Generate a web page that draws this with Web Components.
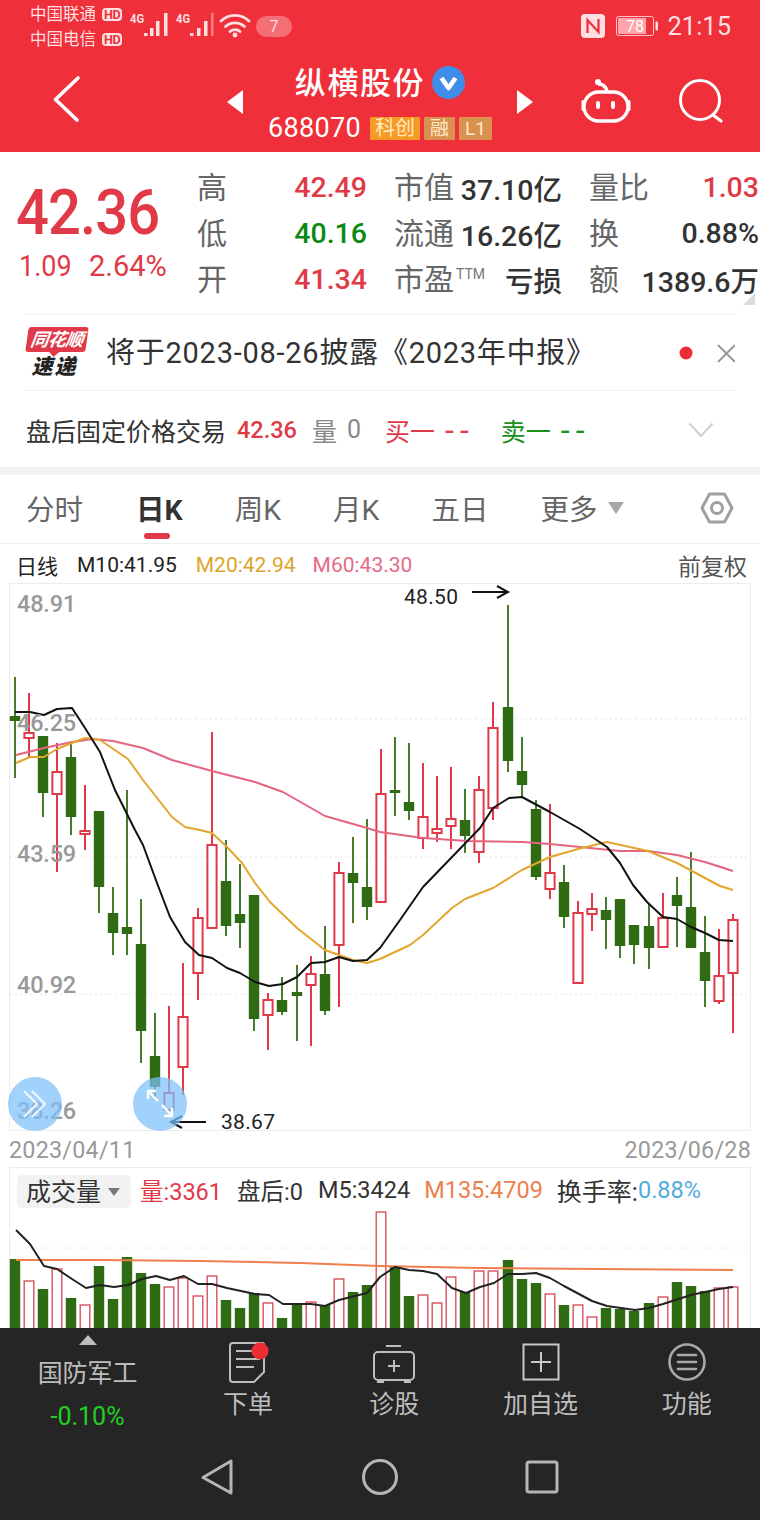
<!DOCTYPE html>
<html lang="zh">
<head>
<meta charset="utf-8">
<title>纵横股份</title>
<style>
  html, body { margin: 0; padding: 0; background: #fff; }
  body {
    width: 760px;
    height: 1520px;
    overflow: hidden;
    font-family: Roboto, "Noto Sans CJK SC", sans-serif;
    display: flex;
    flex-direction: column;
  }
</style>
</head>
<body>
  <stock-header></stock-header>
  <quote-panel></quote-panel>
  <news-strip>将于2023-08-26披露《2023年中报》</news-strip>
  <after-hours></after-hours>
  <period-tabs></period-tabs>
  <kline-chart></kline-chart>
  <volume-chart></volume-chart>
  <bottom-bar></bottom-bar>

<script>
// x, high, low, bodyTop, bodyBottom, g/r  -- read off the screenshot
const CANDLES = [
  [15,677,778,716,721,'g'],[29,693,757,733,738,'r'],[43,736,817,736,793,'g'],[57,743,872,772,794,'r'],
  [71,743,835,757,817,'g'],[85,785,850,831,834,'r'],[99,811,913,811,887,'g'],[113,887,955,913,933,'g'],
  [127,790,955,927,934,'g'],[141,899,1063,944,1031,'g'],[155,1013,1098,1056,1087,'g'],[169,1006,1110,1093,1110,'r'],
  [183,963,1095,1017,1067,'r'],[198,908,1000,918,973,'r'],[212,732,928,845,928,'r'],[226,840,936,881,926,'g'],
  [240,864,948,914,923,'g'],[254,895,1031,895,1019,'g'],[268,993,1050,1000,1015,'r'],[282,977,1015,1000,1012,'g'],
  [297,965,1041,992,996,'g'],[311,956,1046,974,985,'r'],[325,926,1015,974,1011,'g'],[339,862,1007,873,945,'r'],
  [353,837,923,873,883,'g'],[367,819,920,887,907,'g'],[381,749,902,794,902,'r'],[395,737,816,790,793,'g'],
  [409,743,820,802,811,'g'],[423,763,849,817,838,'r'],[437,776,842,829,833,'r'],[451,767,849,819,826,'r'],
  [465,789,853,820,836,'g'],[479,776,863,790,852,'r'],[493,702,820,728,808,'r'],[508,605,772,707,761,'g'],
  [522,737,797,771,785,'g'],[536,800,880,809,877,'g'],[550,804,899,873,889,'r'],[564,865,928,882,917,'g'],
  [578,901,983,913,983,'r'],[592,893,931,909,914,'r'],[606,897,949,910,920,'g'],[620,899,958,899,946,'g'],
  [634,925,964,925,945,'g'],[649,903,969,926,948,'g'],[663,893,947,918,947,'r'],[677,877,947,895,906,'g'],
  [691,852,948,907,948,'g'],[705,916,1007,952,981,'g'],[719,929,1004,976,1001,'r'],[733,914,1033,920,973,'r']
];
const M10 = [15,712,30,712,44,715,57,709,72,708,85,728,100,752,115,790,135,830,143,845,157,883,170,917,185,942,199,955,212,958,227,968,240,973,255,982,269,986,283,984,297,977,311,963,325,962,339,957,353,961,367,960,380,948,400,920,423,887,452,857,480,828,493,808,509,798,522,797,550,812,580,829,607,847,620,863,633,885,647,902,663,917,677,919,691,927,705,933,719,940,733,941];
const M20 = [16,763,30,757,44,757,57,749,72,743,85,738,100,740,128,759,143,780,172,817,185,827,200,830,212,833,227,847,242,863,255,883,270,902,297,928,325,950,353,960,367,963,380,959,410,945,423,935,452,908,465,899,493,888,522,870,550,857,578,849,607,842,648,851,677,863,705,878,720,886,733,890];
const M60 = [16,755,44,748,72,742,93,739,113,741,143,748,172,760,212,771,255,782,283,792,325,816,367,828,380,832,423,838,467,841,523,842,550,844,590,848,620,851,648,851,677,855,705,862,733,871];
const VOL = [1258,1280,1288,1268,1297,1304,1265,1298,1256,1272,1283,1286,1277,1295,1275,1299,1307,1292,1302,1317,1303,1301,1304,1278,1291,1284,1211,1266,1295,1294,1302,1276,1291,1270,1270,1259,1278,1282,1293,1304,1304,1316,1307,1308,1310,1302,1296,1281,1285,1290,1287,1286];
const VOL_M5 = [16,1229,30,1243,44,1265,57,1268,72,1278,86,1287,100,1284,114,1286,128,1284,142,1278,156,1275,170,1279,184,1275,198,1283,212,1283,227,1287,255,1293,269,1294,283,1303,297,1303,311,1303,325,1305,339,1299,367,1292,380,1276,395,1266,409,1269,423,1270,437,1273,452,1287,466,1292,480,1286,494,1282,508,1273,522,1273,536,1272,550,1277,564,1285,592,1300,607,1305,635,1309,649,1307,663,1303,691,1294,719,1288,733,1286];
const VOL_M135 = [16,1259,100,1259,200,1260,300,1262,380,1265,480,1267,600,1268,733,1269];

const RED = '#e03a48';
const GREEN = '#2e6b12';
const FONT = 'Roboto, "Noto Sans CJK SC", sans-serif';

function pts(a) {
  let s = '';
  for (let i = 0; i < a.length; i += 2) s += a[i] + ',' + a[i + 1] + ' ';
  return s;
}

class StockHeader extends HTMLElement {
  constructor() {
    super();
    this.attachShadow({ mode: 'open' });
  }

  connectedCallback() {
    this.shadowRoot.innerHTML = `
      <style>
        :host { display: block; height: 152px; background: #ef303b; color: #fff; font-family: ${FONT}; flex: none; }
        .status { height: 52px; display: flex; align-items: center; padding: 0 29px 0 30px; color: #ffdfe0; }
        .carriers { display: flex; flex-direction: column; font-size: 16.5px; line-height: 25px; width: 100px; flex: none; margin-top: 1px; }
        .carriers div { display: flex; align-items: center; gap: 6px; white-space: nowrap; }
        .hd { font-size: 12.5px; font-weight: 700; background: #ffdfe0; color: #ef303b; border-radius: 4px; line-height: 13px; padding: 0 2px; letter-spacing: -.3px; }
        .badge { margin-left: 4px; width: 36px; height: 21px; border-radius: 11px; background: rgba(255,255,255,.3); text-align: center; font-size: 16px; line-height: 21px; }
        .right { margin-left: auto; display: flex; align-items: center; }
        .time { font-size: 25.5px; margin-left: 8px; letter-spacing: 0; }
        .nav { height: 100px; display: flex; position: relative; }
        .back { width: 220px; flex: none; }
        .mid { width: 320px; flex: none; display: flex; align-items: center; }
        .mid svg { flex: none; }
        .who { flex: 1; display: flex; flex-direction: column; align-items: center; align-self: flex-start; }
        .name { display: flex; align-items: center; font-size: 31px; font-weight: 500; height: 44px; margin-top: 8px; gap: 7px; letter-spacing: 1.6px; }
        .name span { padding-bottom: 3px; }
        .code { display: flex; align-items: center; height: 24px; margin-top: 12px; }
        .num { font-size: 27px; letter-spacing: .3px; margin-right: 9px; }
        .tag { height: 23px; line-height: 23px; font-size: 20px; padding: 0 5px; background: #f59b23; color: #ffeac8; margin-right: 4px; border-radius: 1px; }
        .tag.b { background: #d9914f; font-size: 19px; padding: 0 6px; }
        .icons { display: flex; align-items: flex-start; }
      </style>
      <div class="status">
        <div class="carriers">
          <div>中国联通<span class="hd">HD</span></div>
          <div>中国电信<span class="hd">HD</span></div>
        </div>
        <svg width="122" height="36" viewBox="130 8 122 36" style="flex:none">
          <text x="130" y="23" font-size="13" font-weight="700" fill="#ffdfe0" font-family="Roboto" textLength="14" lengthAdjust="spacingAndGlyphs">4G</text>
          <text x="176" y="23" font-size="13" font-weight="700" fill="#ffdfe0" font-family="Roboto" textLength="14" lengthAdjust="spacingAndGlyphs">4G</text>
          <g fill="#ffdfe0">
            <rect x="144" y="33" width="3.500" height="3"/><rect x="150" y="28" width="3.500" height="8"/><rect x="156" y="21" width="3.500" height="15"/><rect x="164" y="13" width="3.500" height="23"/>
            <rect x="190" y="33" width="3.500" height="3"/><rect x="197" y="28" width="3.500" height="8"/><rect x="204" y="21" width="3.500" height="15"/>
            <rect x="211" y="13" width="2.500" height="23" opacity=".45"/>
          </g>
          <g fill="none" stroke="#ffdfe0" stroke-width="2.800" stroke-linecap="round">
            <path d="M221 21a20 20 0 0 1 28 0"/><path d="M225.500 26.500a14 14 0 0 1 19 0"/><path d="M230 31.500a7.500 7.500 0 0 1 10 0"/>
          </g>
          <circle cx="235" cy="35" r="2.400" fill="#ffdfe0"/>
        </svg>
        <div class="badge">7</div>
        <div class="right">
          <svg width="24" height="24" viewBox="0 0 24 24">
            <rect width="24" height="24" rx="4" fill="#ffdfe0"/>
            <path d="M6.500 19V6l11 12V5" fill="none" stroke="#ef303b" stroke-width="2.200"/>
          </svg>
          <svg width="43" height="20" viewBox="0 0 43 20" style="margin-left:11px">
            <rect x=".5" y=".5" width="37" height="19" rx="2" fill="none" stroke="#ffc5c9"/>
            <rect x="2" y="2" width="28" height="16" fill="#ffa4aa"/>
            <rect x="39.500" y="5.500" width="2.500" height="9" rx="1" fill="#ffdfe0"/>
            <text x="19" y="15.500" text-anchor="middle" font-size="16" fill="#fff" font-family="Roboto">78</text>
          </svg>
          <span class="time">21:15</span>
        </div>
      </div>
      <div class="nav">
        <div class="back">
          <svg width="100" height="100" viewBox="0 52 100 100">
            <path d="M78 78 55.500 99.500 77 120" fill="none" stroke="#fff" stroke-width="3.600" stroke-linecap="round" stroke-linejoin="round"/>
          </svg>
        </div>
        <div class="mid">
          <svg width="26" height="26" viewBox="0 0 26 26"><path d="M7 13 23 1V25Z" fill="#fff"/></svg>
          <div class="who">
            <div class="name"><span>纵横股份</span>
              <svg width="33" height="33" viewBox="0 0 33 33"><circle cx="16.500" cy="16.500" r="16.500" fill="#3f8de8"/><path d="M9.500 12l7 10 7-10" fill="none" stroke="#fff" stroke-width="4.600" stroke-linejoin="round"/></svg>
            </div>
            <div class="code"><span class="num">688070</span><span class="tag">科创</span><span class="tag b">融</span><span class="tag b" style="margin-right:0">L1</span></div>
          </div>
          <svg width="26" height="26" viewBox="0 0 26 26"><path d="M19 13 3 1V25Z" fill="#fff"/></svg>
        </div>
        <div class="icons">
          <svg width="56" height="56" viewBox="578 77 56 56" style="margin:25px 0 0 38px">
            <g fill="none" stroke="#fff" stroke-width="3.400">
              <rect x="584" y="92" width="44" height="29" rx="14.500"/>
              <path d="M598 84c5 0 8 3 9 7"/>
            </g>
            <circle cx="598" cy="82" r="3" fill="#fff"/>
            <rect x="596" y="101" width="4" height="8" rx="2" fill="#fff"/>
            <rect x="611" y="101" width="4" height="8" rx="2" fill="#fff"/>
            <rect x="581.500" y="100" width="3" height="11" rx="1.500" fill="#fff"/>
            <rect x="627.500" y="100" width="3" height="11" rx="1.500" fill="#fff"/>
          </svg>
          <svg width="50" height="50" viewBox="676 76 50 50" style="margin:24px 0 0 42px">
            <circle cx="700" cy="100" r="19.500" fill="none" stroke="#fff" stroke-width="3"/>
            <path d="M713 115l8 6" stroke="#fff" stroke-width="3.200" stroke-linecap="round"/>
          </svg>
        </div>
      </div>
    `;
  }
}
customElements.define('stock-header', StockHeader);

class QuotePanel extends HTMLElement {
  constructor() {
    super();
    this.attachShadow({ mode: 'open' });
  }

  connectedCallback() {
    this.shadowRoot.innerHTML = `
      <style>
        :host { display: flex; height: 162px; box-sizing: border-box; padding-top: 12px; background: #fff; flex: none; position: relative; font-family: ${FONT}; overflow: hidden; }
        .price { width: 197px; flex: none; padding-left: 16px; box-sizing: border-box; color: ${RED}; }
        .big { font-size: 63px; font-weight: 500; line-height: 72px; margin-top: 13px; letter-spacing: -1px; transform: scaleX(.92); transform-origin: left; white-space: nowrap; }
        .chg { font-size: 29px; line-height: 36px; margin-top: -1px; margin-left: 3px; white-space: nowrap; display: flex; }
        .chg span:first-child { width: 70px; transform: scaleX(.93); transform-origin: left; }
        .grid { display: grid; grid-template-columns: 170px 168px 170px; column-gap: 27px; grid-auto-rows: 46px; align-items: center; }
        .cell { display: flex; align-items: center; justify-content: space-between; font-size: 30px; color: #666; white-space: nowrap; }
        .cell span { padding-bottom: 4px; }
        .cell b { font-weight: 500; font-size: 28.500px; color: #333; }
        .cell b.r { color: ${RED}; } .cell b.g { color: #0b8a12; }
        sup { font-size: 14px; vertical-align: 11px; line-height: 0; color: #777; margin-left: 2px; }
        .corner { position: absolute; right: 5px; bottom: 9px; width: 0; height: 0; border-left: 12px solid transparent; border-bottom: 12px solid #dcdcdc; }
      </style>
      <div class="price">
        <div class="big">42.36</div>
        <div class="chg"><span>1.09</span><span>2.64%</span></div>
      </div>
      <div class="grid">
        <div class="cell"><span>高</span><b class="r">42.49</b></div>
        <div class="cell"><span>市值</span><b>37.10亿</b></div>
        <div class="cell"><span>量比</span><b class="r">1.03</b></div>
        <div class="cell"><span>低</span><b class="g">40.16</b></div>
        <div class="cell"><span>流通</span><b>16.26亿</b></div>
        <div class="cell"><span>换</span><b>0.88%</b></div>
        <div class="cell"><span>开</span><b class="r">41.34</b></div>
        <div class="cell"><span>市盈<sup>TTM</sup></span><b>亏损</b></div>
        <div class="cell"><span>额</span><b>1389.6万</b></div>
      </div>
      <div class="corner"></div>
    `;
  }
}
customElements.define('quote-panel', QuotePanel);

class NewsStrip extends HTMLElement {
  constructor() {
    super();
    this.attachShadow({ mode: 'open' });
  }

  connectedCallback() {
    this.shadowRoot.innerHTML = `
      <style>
        :host { display: flex; align-items: center; height: 77px; box-sizing: border-box; margin: 0 25px 0 24px; border-top: 1px solid #f1f1f1; border-bottom: 1px solid #f1f1f1; font-family: ${FONT}; flex: none; }
        .logo { width: 62px; margin-left: 2px; flex: none; display: flex; flex-direction: column; align-items: center; margin-top: 1px; }
        .tag { width: 60px; height: 25px; background: ${RED}; border-radius: 3px; transform: skewX(-8deg); color: #fff; font-size: 18px; line-height: 25px; font-style: italic; font-weight: 700; text-align: center; white-space: nowrap; letter-spacing: -.5px; position: relative; }
        .tag::after { content: ""; position: absolute; left: 24px; bottom: -5px; border: 5px solid transparent; border-bottom: 0; border-top-color: ${RED}; }
        .su { font-size: 21px; line-height: 24px; font-weight: 900; font-style: italic; color: #222; margin-top: 3px; letter-spacing: 2px; margin-right: 5px; }
        .text { margin-left: 18px; padding-bottom: 5px; font-size: 29px; letter-spacing: .75px; color: #333; white-space: nowrap; flex: 1; }
        svg { flex: none; }
      </style>
      <div class="logo"><div class="tag">同花顺</div><div class="su">速递</div></div>
      <div class="text"><slot></slot></div>
      <svg width="62" height="24" viewBox="0 0 62 24"><circle cx="13" cy="12" r="6.500" fill="#ee2c36"/><path d="M45 4l17 17M62 4 45 21" stroke="#9a9a9a" stroke-width="2" fill="none"/></svg>
    `;
  }
}
customElements.define('news-strip', NewsStrip);

class AfterHours extends HTMLElement {
  constructor() {
    super();
    this.attachShadow({ mode: 'open' });
  }

  connectedCallback() {
    this.shadowRoot.innerHTML = `
      <style>
        :host { display: flex; align-items: center; height: 84px; box-sizing: border-box; padding: 1px 0 0 26px; border-bottom: 8px solid #f2f2f2; font-family: ${FONT}; font-size: 25px; color: #333; white-space: nowrap; flex: none; }
        .red { color: ${RED}; } .green { color: #17901c; } .grey { color: #888; }
        span { display: block; }
        .dash { font-size: 32px; letter-spacing: 6px; margin-left: 10px; }
        svg { margin-left: auto; margin-right: 46px; }
      </style>
      <span>盘后固定价格交易</span>
      <span class="red" style="margin-left:11px;font-size:23.500px;font-weight:500">42.36</span>
      <span class="grey" style="margin-left:15px">量</span>
      <span class="grey" style="margin-left:10px">0</span>
      <span class="red" style="margin-left:24px">买一</span>
      <span class="red dash">--</span>
      <span class="green" style="margin-left:26px">卖一</span>
      <span class="green dash">--</span>
      <svg width="26" height="16" viewBox="0 0 26 16"><path d="M1.500 1.500 13 14 24.500 1.500" fill="none" stroke="#cfcfcf" stroke-width="2"/></svg>
    `;
  }
}
customElements.define('after-hours', AfterHours);

class PeriodTabs extends HTMLElement {
  constructor() {
    super();
    this.attachShadow({ mode: 'open' });
  }

  connectedCallback() {
    this.shadowRoot.innerHTML = `
      <style>
        :host { display: flex; align-items: center; height: 69px; box-sizing: border-box; padding: 0 26px 3px 26px; border-bottom: 1px solid #eeeeee; font-family: ${FONT}; font-size: 28.500px; color: #666; white-space: nowrap; flex: none; position: relative; }
        span { display: block; }
        .on { font-weight: 700; color: #333; position: relative; }
        .on::after { content: ""; position: absolute; left: 8px; bottom: -11px; width: 26px; height: 6px; border-radius: 3px; background: ${RED}; }
        .tri { width: 0; height: 0; border: 8px solid transparent; border-bottom: 0; border-top: 12px solid #a8a8a8; margin-left: 11px; }
        svg { margin-left: auto; }
      </style>
      <span>分时</span>
      <span class="on" style="margin-left:53px">日K</span>
      <span style="margin-left:52px">周K</span>
      <span style="margin-left:52px">月K</span>
      <span style="margin-left:52px">五日</span>
      <span style="margin-left:52px">更多</span>
      <span class="tri"></span>
      <svg width="34" height="32" viewBox="0 0 34 32">
        <path d="M9.500 2h15L32 16l-7.500 14h-15L2 16Z" fill="none" stroke="#a0a0a0" stroke-width="3" stroke-linejoin="round"/>
        <circle cx="17" cy="16" r="5.500" fill="none" stroke="#a0a0a0" stroke-width="3"/>
      </svg>
    `;
  }
}
customElements.define('period-tabs', PeriodTabs);

class KlineChart extends HTMLElement {
  constructor() {
    super();
    this.attachShadow({ mode: 'open' });
  }

  connectedCallback() {
    let marks = '';
    for (const [x, hi, lo, top, bot, c] of CANDLES) {
      const col = c === 'g' ? GREEN : RED;
      marks += `<path d="M${x} ${hi}V${lo}" stroke="${col}" stroke-width="2" opacity="${c === 'g' ? .88 : 1}"/>`;
      if (c === 'g') {
        marks += `<rect x="${x - 5.2}" y="${top}" width="10.4" height="${bot - top}" fill="${GREEN}"/>`;
      } else {
        marks += `<rect x="${x - 4.6}" y="${top}" width="9.2" height="${bot - top}" fill="#fff" stroke="${col}" stroke-width="2"/>`;
      }
    }
    this.shadowRoot.innerHTML = `
      <style>
        :host { display: block; flex: none; font-family: ${FONT}; }
        .ma { height: 39px; display: flex; align-items: center; padding: 2px 13px 0 16px; font-size: 21px; color: #222; white-space: nowrap; box-sizing: border-box; }
        .ma span { display: block; }
        .box { position: relative; height: 548px; }
        svg { display: block; }
        .y, .tip { position: absolute; left: 17px; font-size: 23.500px; font-weight: 500; line-height: 28px; color: #999; letter-spacing: -.2px; }
        .tip { font-size: 21px; font-weight: 400; color: #222; letter-spacing: .3px; }
        .fab { position: absolute; top: 494px; width: 54px; height: 54px; border-radius: 50%; background: rgba(125,192,250,.72); }
        .dates { height: 35px; display: flex; justify-content: space-between; align-items: center; padding: 1px 9px 0 9px; font-size: 23.300px; color: #999; letter-spacing: .25px; }
      </style>
      <div class="ma">
        <span>日线</span>
        <span style="margin-left:19px">M10:41.95</span>
        <span style="margin-left:19px;color:#dea42a">M20:42.94</span>
        <span style="margin-left:17px;color:#e56a84">M60:43.30</span>
        <span style="margin-left:auto;color:#555;font-size:23px">前复权</span>
      </div>
      <div class="box">
        <svg width="760" height="548" viewBox="0 583 760 548">
          <rect x="9.500" y="583.500" width="741" height="547" fill="#fff" stroke="#ececec"/>
          <g stroke="#e6e6e6" stroke-dasharray="2 3">
            <path d="M10 719H750M10 857H750M10 994H750"/>
          </g>
          ${marks}
          <g fill="none" stroke-width="2" stroke-linejoin="round">
            <polyline points="${pts(M60)}" stroke="#e5647f"/>
            <polyline points="${pts(M20)}" stroke="#e2a62c"/>
            <polyline points="${pts(M10)}" stroke="#111"/>
          </g>
          <g fill="none" stroke="#111" stroke-width="2">
            <path d="M472 592H507M497 586l11 6-11 6"/>
            <path d="M206 1122H171M182 1116l-11 6 11 6"/>
          </g>
        </svg>
        <span class="y" style="top:7px">48.91</span>
        <span class="y" style="top:126px">46.25</span>
        <span class="y" style="top:257px">43.59</span>
        <span class="y" style="top:388px">40.92</span>
        <span class="y" style="top:514px">38.26</span>
        <span class="tip" style="left:404px;top:0">48.50</span>
        <span class="tip" style="left:221px;top:525px">38.67</span>
        <div class="fab" style="left:8px">
          <svg width="54" height="54" viewBox="0 0 54 54" fill="none" stroke="#fff" stroke-width="2" opacity=".85">
            <path d="M16 14l13 13-13 13M24 14l13 13-13 13"/>
          </svg>
        </div>
        <div class="fab" style="left:133px">
          <svg width="54" height="54" viewBox="0 0 54 54" fill="none" stroke="#fff" stroke-width="2.400">
            <path d="M15 14l10 10M15 22v-8h8M29 28l10 11M39 31v8h-8"/>
          </svg>
        </div>
      </div>
      <div class="dates"><span>2023/04/11</span><span>2023/06/28</span></div>
    `;
  }
}
customElements.define('kline-chart', KlineChart);

class VolumeChart extends HTMLElement {
  constructor() {
    super();
    this.attachShadow({ mode: 'open' });
  }

  connectedCallback() {
    let bars = '';
    VOL.forEach((top, i) => {
      const x = CANDLES[i][0];
      if (CANDLES[i][5] === 'g') {
        bars += `<rect x="${x - 5.2}" y="${top}" width="10.4" height="${1340 - top}" fill="${GREEN}"/>`;
      } else {
        bars += `<rect x="${x - 4.8}" y="${top}" width="9.6" height="${1340 - top}" fill="#fff" stroke="#d9505c" stroke-width="1.400"/>`;
      }
    });
    this.shadowRoot.innerHTML = `
      <style>
        :host { display: block; flex: 1; min-height: 0; overflow: hidden; position: relative; font-family: ${FONT}; }
        svg { position: absolute; left: 0; top: 0; display: block; }
        .head { position: relative; display: flex; align-items: center; height: 33px; margin: 8px 0 0 17px; font-size: 23.500px; color: #333; white-space: nowrap; }
        .head span { display: block; padding-bottom: 3px; }
        .pill { display: flex; align-items: center; width: 114px; height: 33px; box-sizing: border-box; padding-left: 9px; background: #f2f2f2; border-radius: 5px; font-size: 25px; }
        .pill i { display: block; width: 0; height: 0; border: 6.500px solid transparent; border-bottom: 0; border-top: 8px solid #777; margin-left: 7px; }
      </style>
      <svg width="760" height="162" viewBox="0 1166 760 162">
        <rect x="9.500" y="1166.500" width="741" height="200" fill="#fff" stroke="#ececec"/>
        <path d="M10 1247H750" stroke="#e6e6e6" stroke-dasharray="2 3"/>
        ${bars}
        <polyline points="${pts(VOL_M135)}" fill="none" stroke="#ef7f4c" stroke-width="2"/>
        <polyline points="${pts(VOL_M5)}" fill="none" stroke="#222" stroke-width="2" stroke-linejoin="round"/>
      </svg>
      <div class="head">
        <div class="pill"><span>成交量</span><i></i></div>
        <span style="margin-left:9px;color:${RED}">量:3361</span>
        <span style="margin-left:15px">盘后:0</span>
        <span style="margin-left:15px">M5:3424</span>
        <span style="margin-left:14px;color:#ec7f4e">M135:4709</span>
        <span style="margin-left:14px;font-size:25px">换手率:</span><span style="color:#52ace0">0.88%</span>
      </div>
    `;
  }
}
customElements.define('volume-chart', VolumeChart);

class BottomBar extends HTMLElement {
  constructor() {
    super();
    this.attachShadow({ mode: 'open' });
  }

  connectedCallback() {
    this.shadowRoot.innerHTML = `
      <style>
        :host { display: flex; flex-direction: column; flex: none; height: 192px; background: #252525; color: #bdbdbd; font-family: ${FONT}; }
        .tabs { display: grid; grid-template-columns: 175px repeat(4, 1fr); height: 112px; }
        .item { display: flex; flex-direction: column; align-items: center; }
        .item svg { display: block; margin-top: 12px; height: 44px; }
        .item span { font-size: 25px; line-height: 32px; margin-top: 5px; white-space: nowrap; }
        .index { padding-top: 7px; box-sizing: border-box; }
        .up { width: 0; height: 0; border: 9px solid transparent; border-top: 0; border-bottom: 10px solid #bdbdbd; }
        .index b { font-weight: 400; font-size: 25px; line-height: 32px; margin-top: 13px; letter-spacing: -.1px; }
        .index em { font-style: normal; font-size: 25px; line-height: 32px; margin-top: 11px; color: #22cf22; }
        .keys { flex: 1; display: flex; justify-content: center; align-items: center; gap: 122px; padding: 0 0 6px; box-sizing: border-box; height: 80px; }
      </style>
      <div class="tabs">
        <div class="item index"><div class="up"></div><b>国防军工</b><em>-0.10%</em></div>
        <div class="item">
          <svg width="44" height="44" viewBox="0 0 44 44">
            <path d="M7 3H36a2 2 0 0 1 2 2V32L28 42H7a3 3 0 0 1-3-3V6a3 3 0 0 1 3-3Z" fill="none" stroke="#bdbdbd" stroke-width="2"/>
            <path d="M10 11H34M10 19H34M10 27H28" stroke="#bdbdbd" stroke-width="2"/>
            <circle cx="34" cy="11" r="8.500" fill="#ee2c36"/>
          </svg>
          <span>下单</span>
        </div>
        <div class="item">
          <svg width="46" height="44" viewBox="0 0 46 44">
            <path d="M15 6H30" stroke="#bdbdbd" stroke-width="2"/>
            <rect x="3" y="12" width="40" height="28" rx="4" fill="none" stroke="#bdbdbd" stroke-width="2"/>
            <path d="M23 20V32M17 26H29" stroke="#bdbdbd" stroke-width="2"/>
            <path d="M6 42h7M33 42h7" stroke="#bdbdbd" stroke-width="2"/>
          </svg>
          <span>诊股</span>
        </div>
        <div class="item">
          <svg width="38" height="44" viewBox="0 0 38 44">
            <rect x="1.500" y="4.500" width="35" height="35" fill="none" stroke="#c8c8c8" stroke-width="2"/>
            <path d="M19 12V32M9 22H29" stroke="#c8c8c8" stroke-width="2"/>
          </svg>
          <span>加自选</span>
        </div>
        <div class="item">
          <svg width="40" height="44" viewBox="0 0 40 44">
            <circle cx="20" cy="22" r="17.500" fill="none" stroke="#a8a8a8" stroke-width="2.600"/>
            <path d="M11 15H29M11 22H29M11 29H29" stroke="#a8a8a8" stroke-width="2.600" stroke-linecap="round"/>
          </svg>
          <span>功能</span>
        </div>
      </div>
      <div class="keys">
        <svg width="40" height="40" viewBox="0 0 40 40"><path d="M33 4 5 20.500 33 36Z" fill="none" stroke="#b5b5b5" stroke-width="3" stroke-linejoin="round"/></svg>
        <svg width="40" height="40" viewBox="0 0 40 40"><circle cx="20" cy="20" r="16.500" fill="none" stroke="#b5b5b5" stroke-width="3"/></svg>
        <svg width="40" height="40" viewBox="0 0 40 40"><rect x="5" y="5" width="30" height="30" rx="2" fill="none" stroke="#b5b5b5" stroke-width="3"/></svg>
      </div>
    `;
  }
}
customElements.define('bottom-bar', BottomBar);
</script>
</body>
</html>
